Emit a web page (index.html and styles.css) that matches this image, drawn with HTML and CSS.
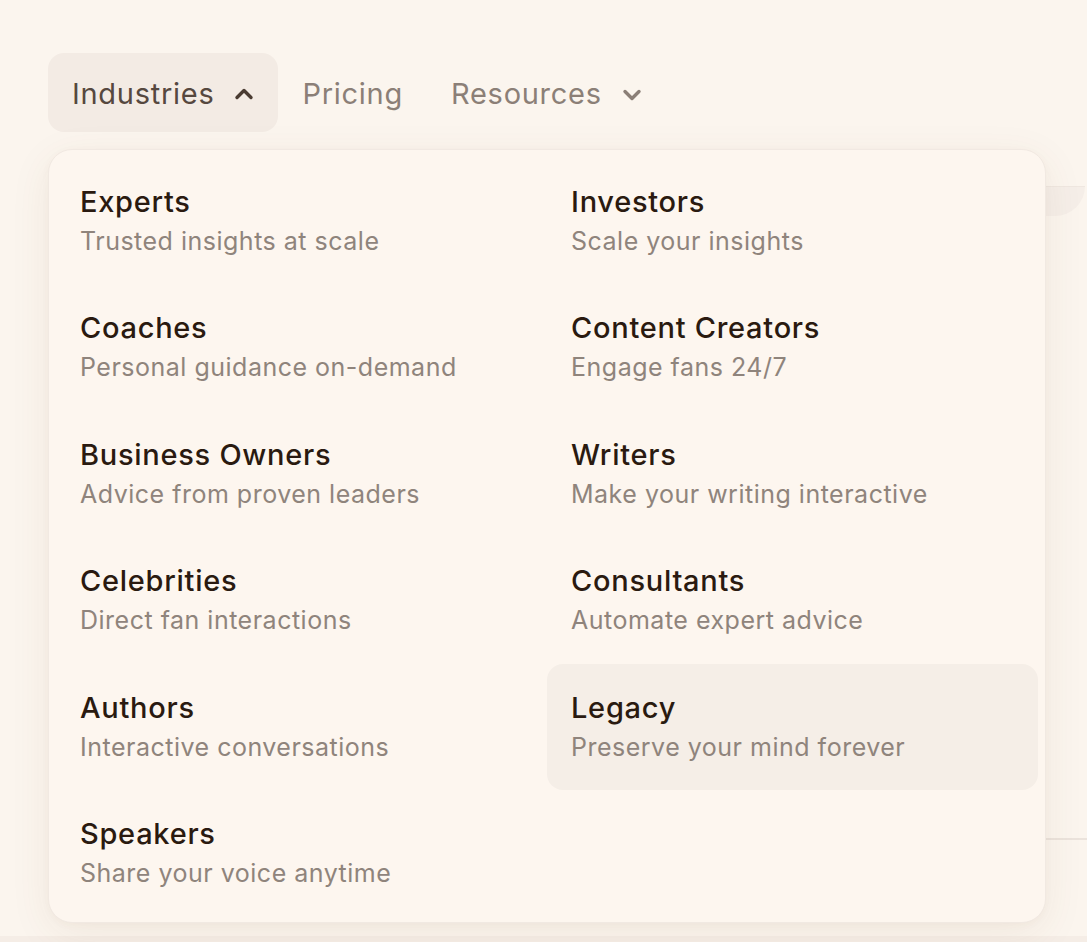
FILE: index.html
```html
<!DOCTYPE html>
<html lang="en">
<head>
<meta charset="utf-8">
<title>Industries menu</title>
<link rel="stylesheet" href="styles.css">
</head>
<body>
<div class="page">
  <header class="nav">
    <button class="nav-item active">Industries
      <svg class="chev" viewBox="0 0 20 20" width="20" height="20"><path d="M3 13.5 L10 6.5 L17 13.5" fill="none" stroke="currentColor" stroke-width="3.4" stroke-linecap="round" stroke-linejoin="round"/></svg>
    </button>
    <a class="nav-item">Pricing</a>
    <a class="nav-item">Resources
      <svg class="chev down" viewBox="0 0 20 20" width="20" height="20"><path d="M3 6.5 L10 13.5 L17 6.5" fill="none" stroke="currentColor" stroke-width="3.4" stroke-linecap="round" stroke-linejoin="round"/></svg>
    </a>
  </header>
  <div class="bg-bar"></div>
  <div class="bg-spacer"></div>
  <div class="bg-line"></div>
  <div class="bg-foot"></div>

  <div class="menu">
    <a class="menu-item"><span class="t">Experts</span><span class="s">Trusted insights at scale</span></a>
    <a class="menu-item"><span class="t">Investors</span><span class="s">Scale your insights</span></a>
    <a class="menu-item"><span class="t">Coaches</span><span class="s">Personal guidance on-demand</span></a>
    <a class="menu-item"><span class="t">Content Creators</span><span class="s">Engage fans 24/7</span></a>
    <a class="menu-item"><span class="t">Business Owners</span><span class="s">Advice from proven leaders</span></a>
    <a class="menu-item"><span class="t">Writers</span><span class="s">Make your writing interactive</span></a>
    <a class="menu-item"><span class="t">Celebrities</span><span class="s">Direct fan interactions</span></a>
    <a class="menu-item"><span class="t">Consultants</span><span class="s">Automate expert advice</span></a>
    <a class="menu-item"><span class="t">Authors</span><span class="s">Interactive conversations</span></a>
    <a class="menu-item hover"><span class="t">Legacy</span><span class="s">Preserve your mind forever</span></a>
    <a class="menu-item"><span class="t">Speakers</span><span class="s">Share your voice anytime</span></a>
  </div>
</div>
</body>
</html>
```

FILE: styles.css
```css
* { box-sizing: border-box; }
html, body { margin: 0; padding: 0; }
body {
  background: #fbf5ee;
  font-family: Inter, "Noto Sans", sans-serif;
  -webkit-font-smoothing: antialiased;
}
.page {
  position: relative;
  width: 1087px;
  height: 942px;
  overflow: hidden;
}
.nav {
  display: flex;
  align-items: center;
  padding: 53px 0 0 48px;
}
.nav-item {
  display: flex;
  align-items: center;
  height: 79px;
  padding: 2px 24px 0;
  border: 0;
  background: transparent;
  font: inherit;
  font-size: 29px;
  letter-spacing: 0.025em;
  color: #8b7f77;
  border-radius: 16px;
  text-decoration: none;
}
.nav-item.active {
  background: #f3ebe4;
  color: #56483f;
}
.chev { margin-left: 20px; flex: none; }
.chev.down { margin-top: 2px; }
.nav-item.active .chev { color: #4a3b32; }
.nav-item .chev { color: #8b7f77; }

.bg-bar {
  margin: 54px 2px 0 100px;
  height: 30px;
  background: #f5eee8;
  border-top: 1px solid #efe7e0;
  border-radius: 0 0 30px 0;
}
.bg-spacer { height: 622px; }
.bg-line { margin-left: 100px; height: 2px; background: #ebe3dc; }
.bg-foot {
  margin-top: 96px;
  height: 20px;
  background: #f5ede6;
}

.menu {
  position: absolute;
  top: 149px;
  left: 48px;
  width: 998px;
  height: 774px;
  padding: 8px 7px 7px;
  background: #fdf6ef;
  border: 1px solid #f1e9e2;
  border-radius: 24px;
  box-shadow: 0 10px 40px rgba(120, 80, 40, 0.08), 0 2px 8px rgba(120, 80, 40, 0.03);
  display: grid;
  grid-template-columns: 1fr 1fr;
  grid-auto-rows: 126.4px;
  align-content: start;
}
.menu-item {
  display: flex;
  flex-direction: column;
  padding: 24px 24px;
  border-radius: 16px;
}
.menu-item.hover { background: #f5eee7; }
.t {
  font-size: 29px;
  line-height: 40px;
  letter-spacing: 0.025em;
  font-weight: 500;
  color: #2a1a10;
}
.s {
  font-size: 25px;
  line-height: 38px;
  letter-spacing: 0.02em;
  color: #8f847c;
}
```
